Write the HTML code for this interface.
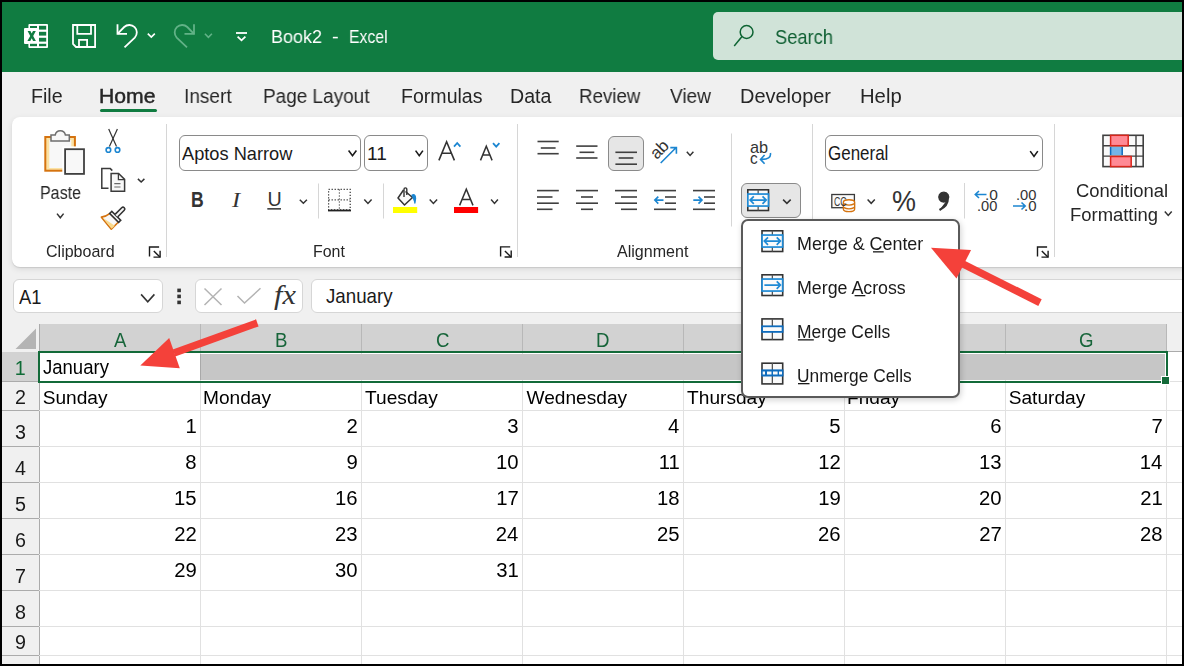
<!DOCTYPE html>
<html><head><meta charset="utf-8"><style>
html,body{margin:0;padding:0;}
body{width:1184px;height:666px;overflow:hidden;position:relative;background:#f0f0f0;font-family:"Liberation Sans",sans-serif;}
svg{position:absolute;left:0;top:0;overflow:visible}
</style></head><body>
<div style="position:absolute;left:0px;top:0px;width:1184px;height:72px;background:#107c41;"></div>
<div style="position:absolute;left:713px;top:12px;width:480px;height:48px;background:#d0e3d8;border-radius:5px;"></div>
<div style="position:absolute;left:12px;top:117px;width:1190px;height:150px;background:#fff;border-radius:8px;box-shadow:0 1px 1px rgba(0,0,0,0.10), 0 2px 6px rgba(0,0,0,0.10);"></div>
<div style="position:absolute;left:100px;top:109px;width:57px;height:3px;background:#107c41;border-radius:2px;"></div>
<div style="position:absolute;left:13px;top:279px;width:150px;height:34px;background:#fff;box-sizing:border-box;border:1px solid #d6d6d6;border-radius:6px;"></div>
<div style="position:absolute;left:195px;top:279px;width:108px;height:34px;background:#fff;box-sizing:border-box;border:1px solid #d6d6d6;border-radius:6px;"></div>
<div style="position:absolute;left:311px;top:279px;width:900px;height:34px;background:#fff;box-sizing:border-box;border:1px solid #d6d6d6;border-radius:6px;"></div>
<div style="position:absolute;left:179px;top:135px;width:182px;height:36px;box-sizing:border-box;border:1px solid #8a8a8a;border-radius:6px;background:#fff"></div>
<div style="position:absolute;left:364px;top:135px;width:64px;height:36px;box-sizing:border-box;border:1px solid #8a8a8a;border-radius:6px;background:#fff"></div>
<div style="position:absolute;left:825px;top:135px;width:218px;height:36px;box-sizing:border-box;border:1px solid #8a8a8a;border-radius:6px;background:#fff"></div>
<div style="position:absolute;left:608px;top:135.5px;width:36px;height:35px;box-sizing:border-box;border:1px solid #8a8a8a;border-radius:6px;background:#e6e6e6"></div>
<div style="position:absolute;left:741px;top:183px;width:60px;height:35px;box-sizing:border-box;border:1px solid #8a8a8a;border-radius:6px;background:#e6e6e6"></div>
<div style="position:absolute;left:651px;top:141px;font-family:'Liberation Sans',sans-serif;font-size:17px;line-height:1;color:#333;transform:rotate(-45deg);transform-origin:50% 50%;left:649.5px;top:140.5px">ab</div>
<svg width="1184" height="666"><path d="M29.4,24 H47 a1,1 0 0 1 1,1 V47 a1,1 0 0 1 -1,1 H29.4 a1,1 0 0 1 -1,-1 V44 H25 a1,1 0 0 1 -1,-1 V29 a1,1 0 0 1 1,-1 H28.4 V25 a1,1 0 0 1 1,-1 Z" fill="#fff"/><rect x="39" y="25.8" width="7.2" height="3.8" fill="#107c41"/><rect x="39" y="31.8" width="7.2" height="3.8" fill="#107c41"/><rect x="39" y="37.8" width="7.2" height="3.8" fill="#107c41"/><rect x="39" y="43.8" width="7.2" height="2.4" fill="#107c41"/><rect x="30" y="26" width="7" height="2" fill="#107c41"/><rect x="30" y="43.8" width="7" height="2.4" fill="#107c41"/><path d="M27.6,31 H30.4 L31.7,33.6 L33,31 H35.8 L33.2,35.9 L35.9,41 H33.1 L31.7,38.2 L30.3,41 H27.4 L30.2,35.9 Z" fill="#107c41"/><g fill="none" stroke="#fff" stroke-width="1.8"><path d="M73,25 H95.1 V47 H76 L73,44 Z"/><path d="M77.3,25 V33.8 H91 V25"/><path d="M79,47 V39.9 H87.1 V47"/></g><g fill="none" stroke="#fff" stroke-width="1.8"><path d="M117.5,24.2 V33.9 H127"/><path d="M117.5,33.9 L124.2,27 A7.5,7.5 0 0 1 134.8,37.6 L124.5,47.3"/><path d="M147.8,33.6 L151.3,37.1 L154.8,33.6" stroke-width="1.6"/></g><g fill="none" stroke="#62b287" stroke-width="1.8" transform="translate(311.5,0) scale(-1,1)"><path d="M117.5,24.2 V33.9 H127"/><path d="M117.5,33.9 L124.2,27 A7.5,7.5 0 0 1 134.8,37.6 L124.5,47.3"/></g><path d="M204.9,33.8 L208.4,37.3 L211.9,33.8" fill="none" stroke="#62b287" stroke-width="1.6"/><rect x="236" y="32.1" width="11" height="1.8" fill="#fff"/><path d="M237.6,36.6 L241.5,40.3 L245.4,36.6" fill="none" stroke="#fff" stroke-width="1.8"/><g fill="none" stroke="#0e6433" stroke-width="1.5"><circle cx="746.6" cy="32" r="6.4"/><path d="M742,36.6 L734.2,45.9"/></g><rect x="45.3" y="137" width="29.6" height="33.7" fill="#fbe2a4" stroke="#d5730f" stroke-width="2"/><rect x="49.3" y="140" width="22" height="28" fill="#f8f8f8"/><path d="M55.2,135 A5.2,5.2 0 0 1 65.4,135 H69.3 V141 H51 V135 Z" fill="#f8f8f8" stroke="#6e6e6e" stroke-width="1.5"/><rect x="62.3" y="146.4" width="24" height="30.4" fill="#fff"/><rect x="65.1" y="149.2" width="18.9" height="24.7" fill="#f8f8f8" stroke="#404040" stroke-width="1.8"/><g fill="none" stroke="#333" stroke-width="1.2"><path d="M108.7,129 L116.5,146.6"/><path d="M117.4,129 L109.4,146.6"/></g><g fill="none" stroke="#1c86d1" stroke-width="1.6"><circle cx="108.4" cy="149.9" r="2.3"/><circle cx="117.5" cy="149.9" r="2.3"/></g><path d="M108.5,188.3 H101.8 V168.6 H110.3 L112.3,170.6" fill="none" stroke="#3b3b3b" stroke-width="1.5"/><path d="M111.1,173.4 H118.6 L124.6,179.4 V191.2 H111.1 Z" fill="#f8f8f8" stroke="#3b3b3b" stroke-width="1.5"/><path d="M118.4,173.4 V179.6 H124.6" fill="none" stroke="#3b3b3b" stroke-width="1.3"/><path d="M114.3,183.7 H120.5 M114.3,187 H120.5" stroke="#6a6a6a" stroke-width="1.2"/><g transform="translate(115.2,216.8) rotate(45)"><path d="M-6,1.3 Q-6.5,6 -9.5,10 L6,11.5 V1.3 Z" fill="#f8f8f8" stroke="#d5730f" stroke-width="1.6" stroke-linejoin="round"/><path d="M-8.5,9.5 L6,11 V6.5 Z" fill="#f9d98c"/><path d="M-6.3,-1.5 H6.3 V1.5 H-6.3 Z" fill="#f8f8f8" stroke="#333" stroke-width="1.6"/><path d="M-1.8,-1.6 V-11 A1.8,1.8 0 0 1 1.8,-11 V-1.6" fill="#f8f8f8" stroke="#333" stroke-width="1.6"/></g><path d="M57.0,213.6 L60.3,217.70000000000002 L63.6,213.6" fill="none" stroke="#333" stroke-width="1.5"/><path d="M137.9,178.9 L141.15,182.0 L144.4,178.9" fill="none" stroke="#333" stroke-width="1.5"/><g fill="none" stroke="#1a1a1a" stroke-width="1.4"><path d="M159.1,247 H149.5 V256.6"/><path d="M153.8,251.1 L159.9,257"/><path d="M160.1,250.7 V257.1 H153.5"/></g><g fill="none" stroke="#1a1a1a" stroke-width="1.4"><path d="M510.20000000000005,246.9 H500.6 V256.5"/><path d="M504.90000000000003,251.0 L511.0,256.9"/><path d="M511.20000000000005,250.6 V257.0 H504.6"/></g><g fill="none" stroke="#1a1a1a" stroke-width="1.4"><path d="M1047.1,247 H1037.5 V256.6"/><path d="M1041.8,251.1 L1047.9,257"/><path d="M1048.1,250.7 V257.1 H1041.5"/></g><rect x="166" y="124" width="1" height="133" fill="#d6d6d6"/><rect x="517" y="124" width="1" height="133" fill="#d6d6d6"/><rect x="812" y="124" width="1" height="133" fill="#d6d6d6"/><rect x="1054" y="124" width="1" height="133" fill="#d6d6d6"/><rect x="318" y="183.5" width="1" height="35.0" fill="#d6d6d6"/><rect x="383" y="183.5" width="1" height="35.0" fill="#d6d6d6"/><rect x="731" y="133.5" width="1" height="93.0" fill="#d6d6d6"/><rect x="964" y="183" width="1" height="35.5" fill="#d6d6d6"/><path d="M348.6,150.6 L352.5,155.70000000000002 L356.4,150.6" fill="none" stroke="#1a1a1a" stroke-width="1.6"/><path d="M415.6,150.6 L419.25,155.70000000000002 L422.9,150.6" fill="none" stroke="#1a1a1a" stroke-width="1.6"/><path d="M1030.1999999999998,151.1 L1034.0,156.4 L1037.8000000000002,151.1" fill="none" stroke="#1a1a1a" stroke-width="1.6"/><path d="M438.9,160.4 L446.6,141.8 L454.4,160.4 M441.9,153.2 H451.3" fill="none" stroke="#333" stroke-width="1.6"/><path d="M454,146.6 L457.2,143 L460.4,146.6" fill="none" stroke="#1c86d1" stroke-width="1.8"/><path d="M480.5,160.4 L486.3,146.2 L492.1,160.4 M482.8,155 H489.8" fill="none" stroke="#333" stroke-width="1.5"/><path d="M493,143.2 L496.2,146.6 L499.4,143.2" fill="none" stroke="#1c86d1" stroke-width="1.8"/><rect x="267.3" y="208.1" width="13.7" height="1.5" fill="#333"/><path d="M299.8,199.79999999999998 L303.35,203.20000000000002 L306.9,199.79999999999998" fill="none" stroke="#333" stroke-width="1.5"/><g fill="none" stroke="#333" stroke-width="1.2" stroke-dasharray="1.2,1.8"><rect x="328.6" y="189.4" width="21.6" height="20.4"/><path d="M339.4,189.4 V209.8 M328.6,199.8 H350.2"/></g><rect x="328" y="209.6" width="23" height="1.8" fill="#222"/><path d="M364.3,199.6 L367.95,203.4 L371.59999999999997,199.6" fill="none" stroke="#333" stroke-width="1.5"/><path d="M403.5,190 L398,198 L404.5,205 L412.5,197.5 L405.5,191.5" fill="#fafafa" stroke="#333" stroke-width="1.5" stroke-linejoin="round"/><path d="M404,197 V189.3 A1.4,1.4 0 0 1 406.8,189.3 V195" fill="none" stroke="#333" stroke-width="1.4"/><path d="M411.5,195.5 Q415.5,193 415.5,198.5 L414.8,203.5" fill="#1c86d1" stroke="#1c86d1" stroke-width="1.4"/><rect x="393" y="207" width="24.2" height="6" fill="#ffff00"/><path d="M429.70000000000005,199.6 L433.4,203.4 L437.09999999999997,199.6" fill="none" stroke="#333" stroke-width="1.5"/><path d="M459.6,205.4 L466.3,189.3 L473,205.4 M462,199.5 H470.6" fill="none" stroke="#333" stroke-width="1.5"/><rect x="454" y="207" width="24.1" height="6" fill="#ff0000"/><path d="M491.1,199.6 L494.5,203.4 L497.9,199.6" fill="none" stroke="#333" stroke-width="1.5"/><rect x="537.5" y="140.7" width="21.200000000000045" height="1.6" fill="#404040"/><rect x="540.8" y="147.2" width="14.800000000000068" height="1.6" fill="#404040"/><rect x="537.5" y="152.89999999999998" width="21.200000000000045" height="1.6" fill="#404040"/><rect x="576.2" y="145.29999999999998" width="21.299999999999955" height="1.6" fill="#404040"/><rect x="579.5" y="151.5" width="14.799999999999955" height="1.6" fill="#404040"/><rect x="576.2" y="157.2" width="21.299999999999955" height="1.6" fill="#404040"/><rect x="615.4" y="151.5" width="21.600000000000023" height="1.6" fill="#404040"/><rect x="618.7" y="157.2" width="14.699999999999932" height="1.6" fill="#404040"/><rect x="615.4" y="163.39999999999998" width="21.600000000000023" height="1.6" fill="#404040"/><path d="M660.7,163 L676.2,147.5 M670.3,147.6 H676.4 V153.7" fill="none" stroke="#1c86d1" stroke-width="1.6"/><path d="M686.8000000000001,151.79999999999998 L690.1,155.4 L693.4,151.79999999999998" fill="none" stroke="#333" stroke-width="1.5"/><rect x="537" y="189.79999999999998" width="21.799999999999955" height="1.6" fill="#404040"/><rect x="537" y="196.2" width="15.5" height="1.6" fill="#404040"/><rect x="537" y="202.39999999999998" width="21.799999999999955" height="1.6" fill="#404040"/><rect x="537" y="208.5" width="15.5" height="1.6" fill="#404040"/><rect x="576" y="189.79999999999998" width="22" height="1.6" fill="#404040"/><rect x="581" y="196.2" width="12" height="1.6" fill="#404040"/><rect x="576" y="202.39999999999998" width="22" height="1.6" fill="#404040"/><rect x="581" y="208.5" width="12" height="1.6" fill="#404040"/><rect x="615" y="189.79999999999998" width="22" height="1.6" fill="#404040"/><rect x="621" y="196.2" width="16" height="1.6" fill="#404040"/><rect x="615" y="202.39999999999998" width="22" height="1.6" fill="#404040"/><rect x="621" y="208.5" width="16" height="1.6" fill="#404040"/><rect x="654" y="189.79999999999998" width="22" height="1.6" fill="#404040"/><rect x="665" y="196.2" width="11" height="1.6" fill="#404040"/><rect x="665" y="202.39999999999998" width="11" height="1.6" fill="#404040"/><rect x="654" y="208.5" width="22" height="1.6" fill="#404040"/><path d="M663.5,200.1 H655 M658.3,196.6 L654.8,200.1 L658.3,203.6" fill="none" stroke="#1c86d1" stroke-width="1.6"/><rect x="693" y="189.79999999999998" width="22" height="1.6" fill="#404040"/><rect x="704" y="196.2" width="11" height="1.6" fill="#404040"/><rect x="704" y="202.39999999999998" width="11" height="1.6" fill="#404040"/><rect x="693" y="208.5" width="22" height="1.6" fill="#404040"/><path d="M693.3,200.1 H701.8 M698.5,196.6 L702,200.1 L698.5,203.6" fill="none" stroke="#1c86d1" stroke-width="1.6"/><path d="M770.4,153 Q771.5,159.5 761,159.4 M764.6,155 L760.5,159.4 L764.6,163.8" fill="none" stroke="#1c86d1" stroke-width="1.6"/><g transform="translate(747,189) scale(1.0)"><rect x="0.8" y="0.8" width="20.7" height="20.7" fill="#fafafa" stroke="#333" stroke-width="1.6"/><path d="M11.15,0.8 V21.5" stroke="#555" stroke-width="1.3"/><rect x="0.85" y="5.05" width="20.6" height="12" fill="#fafafa" stroke="#1f8ad5" stroke-width="1.7"/><path d="M3.2,11.1 H19.1 M6.8,7.4 L3.1,11.1 L6.8,14.8 M15.5,7.4 L19.2,11.1 L15.5,14.8" fill="none" stroke="#1f8ad5" stroke-width="1.7"/></g><path d="M783.1,199.6 L786.9,203.4 L790.6999999999999,199.6" fill="none" stroke="#333" stroke-width="1.5"/><rect x="831.8" y="194.5" width="22.6" height="13.2" fill="#fafafa" stroke="#3a3a3a" stroke-width="1.3"/><g fill="#fff" stroke="#d5730f" stroke-width="1.4"><rect x="843.4" y="199.8" width="11.2" height="11.8" rx="5.6" ry="2.4"/><path d="M843.4,203.7 Q849,206.6 854.6,203.7 M843.4,207.4 Q849,210.3 854.6,207.4" fill="none"/></g><path d="M867.6,199.6 L871.2,203.3 L874.8,199.6" fill="none" stroke="#333" stroke-width="1.5"/><path d="M943.8,192.6 a4.5,4.5 0 1 1 -0.1,0 M947.8,199 Q948,205.5 939.5,210" fill="#333" stroke="#333" stroke-width="2.2"/><path d="M986.5,194.5 H975.5 M979,191 L975.3,194.5 L979,198" fill="none" stroke="#1c86d1" stroke-width="1.6"/><path d="M1013,206 H1025 M1021.5,202.5 L1025.2,206 L1021.5,209.5" fill="none" stroke="#1c86d1" stroke-width="1.6"/><rect x="1103" y="135.3" width="40.2" height="31.3" fill="#fafafa" stroke="#404040" stroke-width="1.6"/><path d="M1103,145.8 H1143.2 M1103,156.1 H1143.2 M1136,135.3 V166.6" stroke="#404040" stroke-width="1.4"/><rect x="1110.6" y="135.3" width="17.6" height="10.4" fill="#ff8a95" stroke="#d9261c" stroke-width="1.5"/><rect x="1110.6" y="147" width="11.6" height="8" fill="#74b5e9"/><path d="M1110.6,147 V155 M1122.2,147 V155" stroke="#0f6cbd" stroke-width="1.5"/><rect x="1110.6" y="156.5" width="20.6" height="10.1" fill="#ff8a95" stroke="#d9261c" stroke-width="1.5"/><path d="M1164.8,211.6 L1168.25,215.4 L1171.7,211.6" fill="none" stroke="#333" stroke-width="1.5"/><g fill="none" stroke="#b3b3b3" stroke-width="1.5"><path d="M204.5,288.5 L221.5,305 M221.5,288.5 L204.5,305"/><path d="M237.5,296 L244.5,303 L260.5,288.3"/></g><path d="M141.1,294.40000000000003 L147.75,301.7 L154.4,294.40000000000003" fill="none" stroke="#333" stroke-width="1.6"/><g fill="#333"><rect x="177.3" y="288.6" width="3.6" height="3.6"/><rect x="177.3" y="294.6" width="3.6" height="3.6"/><rect x="177.3" y="300.6" width="3.6" height="3.6"/></g></svg>
<div style="position:absolute;left:190.75px;top:190.00px;font-family:'Liberation Sans',sans-serif;font-size:21.45px;line-height:1;white-space:pre;color:#333;font-weight:bold;font-style:normal;transform-origin:0 0;transform:scaleX(0.8196);">B</div>
<div style="position:absolute;left:231.64px;top:190.00px;font-family:'Liberation Serif',serif;font-size:21.45px;line-height:1;white-space:pre;color:#333;font-weight:normal;font-style:italic;transform-origin:0 0;transform:scaleX(1.1356);">I</div>
<div style="position:absolute;left:267.52px;top:190.00px;font-family:'Liberation Sans',sans-serif;font-size:19.71px;line-height:1;white-space:pre;color:#333;font-weight:normal;font-style:normal;transform-origin:0 0;">U</div>
<div style="position:absolute;left:833.56px;top:195.00px;font-family:'Liberation Sans',sans-serif;font-size:13.04px;line-height:1;white-space:pre;color:#3a3a3a;font-weight:normal;font-style:normal;transform-origin:0 0;transform:scaleX(0.6756);">CC</div>
<div style="position:absolute;left:891.99px;top:186.00px;font-family:'Liberation Sans',sans-serif;font-size:29.42px;line-height:1;white-space:pre;color:#333;font-weight:normal;font-style:normal;transform-origin:0 0;transform:scaleX(0.9173);">%</div>
<div style="position:absolute;left:984.60px;top:188.00px;font-family:'Liberation Sans',sans-serif;font-size:14.20px;line-height:1;white-space:pre;color:#333;font-weight:normal;font-style:normal;transform-origin:0 0;transform:scaleX(1.0944);">.0</div>
<div style="position:absolute;left:976.98px;top:199.00px;font-family:'Liberation Sans',sans-serif;font-size:14.20px;line-height:1;white-space:pre;color:#333;font-weight:normal;font-style:normal;transform-origin:0 0;transform:scaleX(1.0307);">.00</div>
<div style="position:absolute;left:1015.68px;top:188.00px;font-family:'Liberation Sans',sans-serif;font-size:14.20px;line-height:1;white-space:pre;color:#333;font-weight:normal;font-style:normal;transform-origin:0 0;transform:scaleX(1.0363);">.00</div>
<div style="position:absolute;left:1023.65px;top:199.00px;font-family:'Liberation Sans',sans-serif;font-size:14.20px;line-height:1;white-space:pre;color:#333;font-weight:normal;font-style:normal;transform-origin:0 0;transform:scaleX(1.0546);">.0</div>
<div style="position:absolute;left:274.20px;top:282.00px;font-family:'Liberation Serif',serif;font-size:26.81px;line-height:1;white-space:pre;color:#333;font-weight:normal;font-style:italic;transform-origin:0 0;transform:scaleX(1.1330);">fx</div>
<div style="position:absolute;left:750.45px;top:140.00px;font-family:'Liberation Sans',sans-serif;font-size:16.81px;line-height:1;white-space:pre;color:#333;font-weight:normal;font-style:normal;transform-origin:0 0;transform:scaleX(0.9703);">ab</div>
<div style="position:absolute;left:750.49px;top:150.00px;font-family:'Liberation Sans',sans-serif;font-size:16.50px;line-height:1;white-space:pre;color:#333;font-weight:normal;font-style:normal;transform-origin:0 0;transform:scaleX(0.9300);">c</div>
<div style="position:absolute;left:270.76px;top:28.00px;font-family:'Liberation Sans',sans-serif;font-size:18.41px;line-height:1;white-space:pre;color:#fff;font-weight:normal;font-style:normal;transform-origin:0 0;transform:scaleX(0.9764);will-change:transform;">Book2</div>
<div style="position:absolute;left:332.20px;top:28.00px;font-family:'Liberation Sans',sans-serif;font-size:18.41px;line-height:1;white-space:pre;color:#fff;font-weight:normal;font-style:normal;transform-origin:0 0;transform:scaleX(1.0864);will-change:transform;">-</div>
<div style="position:absolute;left:348.74px;top:28.00px;font-family:'Liberation Sans',sans-serif;font-size:18.41px;line-height:1;white-space:pre;color:#fff;font-weight:normal;font-style:normal;transform-origin:0 0;transform:scaleX(0.8561);will-change:transform;">Excel</div>
<div style="position:absolute;left:775.17px;top:28.00px;font-family:'Liberation Sans',sans-serif;font-size:19.42px;line-height:1;white-space:pre;color:#0e5f32;font-weight:normal;font-style:normal;transform-origin:0 0;transform:scaleX(0.9419);will-change:transform;">Search</div>
<div style="position:absolute;left:31.03px;top:87.00px;font-family:'Liberation Sans',sans-serif;font-size:19.57px;line-height:1;white-space:pre;color:#262626;font-weight:normal;font-style:normal;transform-origin:0 0;transform:scaleX(1.0048);will-change:transform;">File</div>
<div style="position:absolute;left:99.31px;top:87.00px;font-family:'Liberation Sans',sans-serif;font-size:19.57px;line-height:1;white-space:pre;color:#262626;font-weight:normal;font-style:normal;transform-origin:0 0;transform:scaleX(1.0815);-webkit-text-stroke:0.45px #262626;will-change:transform;">Home</div>
<div style="position:absolute;left:184.28px;top:87.00px;font-family:'Liberation Sans',sans-serif;font-size:19.57px;line-height:1;white-space:pre;color:#262626;font-weight:normal;font-style:normal;transform-origin:0 0;transform:scaleX(0.9741);will-change:transform;">Insert</div>
<div style="position:absolute;left:263.48px;top:87.00px;font-family:'Liberation Sans',sans-serif;font-size:19.57px;line-height:1;white-space:pre;color:#262626;font-weight:normal;font-style:normal;transform-origin:0 0;transform:scaleX(0.9688);will-change:transform;">Page Layout</div>
<div style="position:absolute;left:401.14px;top:87.00px;font-family:'Liberation Sans',sans-serif;font-size:19.57px;line-height:1;white-space:pre;color:#262626;font-weight:normal;font-style:normal;transform-origin:0 0;will-change:transform;">Formulas</div>
<div style="position:absolute;left:510.23px;top:87.00px;font-family:'Liberation Sans',sans-serif;font-size:19.57px;line-height:1;white-space:pre;color:#262626;font-weight:normal;font-style:normal;transform-origin:0 0;will-change:transform;">Data</div>
<div style="position:absolute;left:578.50px;top:87.00px;font-family:'Liberation Sans',sans-serif;font-size:19.57px;line-height:1;white-space:pre;color:#262626;font-weight:normal;font-style:normal;transform-origin:0 0;transform:scaleX(0.9561);will-change:transform;">Review</div>
<div style="position:absolute;left:670.30px;top:87.00px;font-family:'Liberation Sans',sans-serif;font-size:19.57px;line-height:1;white-space:pre;color:#262626;font-weight:normal;font-style:normal;transform-origin:0 0;transform:scaleX(0.9712);will-change:transform;">View</div>
<div style="position:absolute;left:739.60px;top:87.00px;font-family:'Liberation Sans',sans-serif;font-size:19.57px;line-height:1;white-space:pre;color:#262626;font-weight:normal;font-style:normal;transform-origin:0 0;transform:scaleX(1.0208);will-change:transform;">Developer</div>
<div style="position:absolute;left:859.88px;top:87.00px;font-family:'Liberation Sans',sans-serif;font-size:19.57px;line-height:1;white-space:pre;color:#262626;font-weight:normal;font-style:normal;transform-origin:0 0;transform:scaleX(1.0349);will-change:transform;">Help</div>
<div style="position:absolute;left:40.22px;top:184.00px;font-family:'Liberation Sans',sans-serif;font-size:18.55px;line-height:1;white-space:pre;color:#262626;font-weight:normal;font-style:normal;transform-origin:0 0;transform:scaleX(0.8657);will-change:transform;">Paste</div>
<div style="position:absolute;left:45.60px;top:244.00px;font-family:'Liberation Sans',sans-serif;font-size:15.94px;line-height:1;white-space:pre;color:#262626;font-weight:normal;font-style:normal;transform-origin:0 0;transform:scaleX(1.0055);will-change:transform;">Clipboard</div>
<div style="position:absolute;left:313.23px;top:244.00px;font-family:'Liberation Sans',sans-serif;font-size:15.94px;line-height:1;white-space:pre;color:#262626;font-weight:normal;font-style:normal;transform-origin:0 0;transform:scaleX(0.9949);will-change:transform;">Font</div>
<div style="position:absolute;left:617.40px;top:244.00px;font-family:'Liberation Sans',sans-serif;font-size:15.94px;line-height:1;white-space:pre;color:#262626;font-weight:normal;font-style:normal;transform-origin:0 0;transform:scaleX(1.0068);will-change:transform;">Alignment</div>
<div style="position:absolute;left:1076.38px;top:182.00px;font-family:'Liberation Sans',sans-serif;font-size:18.41px;line-height:1;white-space:pre;color:#262626;font-weight:normal;font-style:normal;transform-origin:0 0;will-change:transform;">Conditional</div>
<div style="position:absolute;left:1069.83px;top:206.00px;font-family:'Liberation Sans',sans-serif;font-size:18.12px;line-height:1;white-space:pre;color:#262626;font-weight:normal;font-style:normal;transform-origin:0 0;transform:scaleX(1.0174);will-change:transform;">Formatting</div>
<div style="position:absolute;left:182.20px;top:145.00px;font-family:'Liberation Sans',sans-serif;font-size:18.84px;line-height:1;white-space:pre;color:#1a1a1a;font-weight:normal;font-style:normal;transform-origin:0 0;transform:scaleX(0.9679);">Aptos Narrow</div>
<div style="position:absolute;left:366.66px;top:145.00px;font-family:'Liberation Sans',sans-serif;font-size:18.84px;line-height:1;white-space:pre;color:#1a1a1a;font-weight:normal;font-style:normal;transform-origin:0 0;transform:scaleX(1.0133);">11</div>
<div style="position:absolute;left:827.65px;top:143.00px;font-family:'Liberation Sans',sans-serif;font-size:20.29px;line-height:1;white-space:pre;color:#1a1a1a;font-weight:normal;font-style:normal;transform-origin:0 0;transform:scaleX(0.8368);">General</div>
<div style="position:absolute;left:19.40px;top:287.00px;font-family:'Liberation Sans',sans-serif;font-size:20.29px;line-height:1;white-space:pre;color:#1a1a1a;font-weight:normal;font-style:normal;transform-origin:0 0;transform:scaleX(0.9045);">A1</div>
<div style="position:absolute;left:326.21px;top:287.00px;font-family:'Liberation Sans',sans-serif;font-size:19.42px;line-height:1;white-space:pre;color:#1a1a1a;font-weight:normal;font-style:normal;transform-origin:0 0;transform:scaleX(0.9652);">January</div>
<div style="position:absolute;left:39px;top:352px;width:1145px;height:314px;background:#fff;"></div>
<div style="position:absolute;left:39px;top:324px;width:1127px;height:28px;background:#d2d2d2;"></div>
<div style="position:absolute;left:39px;top:351px;width:1145px;height:1px;background:#ababab;"></div>
<div style="position:absolute;left:2px;top:352px;width:37px;height:314px;background:#f0f0f0;"></div>
<div style="position:absolute;left:2px;top:352px;width:37px;height:29px;background:#d2d2d2;"></div>
<div style="position:absolute;left:39px;top:324px;width:1px;height:342px;background:#ababab;"></div>
<div style="position:absolute;left:200px;top:324px;width:1px;height:28px;background:#b8b8b8;"></div>
<div style="position:absolute;left:200px;top:352px;width:1px;height:314px;background:#e1e1e1;"></div>
<div style="position:absolute;left:361px;top:324px;width:1px;height:28px;background:#b8b8b8;"></div>
<div style="position:absolute;left:361px;top:352px;width:1px;height:314px;background:#e1e1e1;"></div>
<div style="position:absolute;left:522px;top:324px;width:1px;height:28px;background:#b8b8b8;"></div>
<div style="position:absolute;left:522px;top:352px;width:1px;height:314px;background:#e1e1e1;"></div>
<div style="position:absolute;left:683px;top:324px;width:1px;height:28px;background:#b8b8b8;"></div>
<div style="position:absolute;left:683px;top:352px;width:1px;height:314px;background:#e1e1e1;"></div>
<div style="position:absolute;left:844px;top:324px;width:1px;height:28px;background:#b8b8b8;"></div>
<div style="position:absolute;left:844px;top:352px;width:1px;height:314px;background:#e1e1e1;"></div>
<div style="position:absolute;left:1005px;top:324px;width:1px;height:28px;background:#b8b8b8;"></div>
<div style="position:absolute;left:1005px;top:352px;width:1px;height:314px;background:#e1e1e1;"></div>
<div style="position:absolute;left:1166px;top:324px;width:1px;height:28px;background:#b8b8b8;"></div>
<div style="position:absolute;left:1166px;top:352px;width:1px;height:314px;background:#e1e1e1;"></div>
<div style="position:absolute;left:39px;top:381px;width:1145px;height:1px;background:#e1e1e1;"></div>
<div style="position:absolute;left:2px;top:381px;width:37px;height:1px;background:#ababab;"></div>
<div style="position:absolute;left:39px;top:410px;width:1145px;height:1px;background:#e1e1e1;"></div>
<div style="position:absolute;left:2px;top:410px;width:37px;height:1px;background:#ababab;"></div>
<div style="position:absolute;left:39px;top:446px;width:1145px;height:1px;background:#e1e1e1;"></div>
<div style="position:absolute;left:2px;top:446px;width:37px;height:1px;background:#ababab;"></div>
<div style="position:absolute;left:39px;top:482px;width:1145px;height:1px;background:#e1e1e1;"></div>
<div style="position:absolute;left:2px;top:482px;width:37px;height:1px;background:#ababab;"></div>
<div style="position:absolute;left:39px;top:518px;width:1145px;height:1px;background:#e1e1e1;"></div>
<div style="position:absolute;left:2px;top:518px;width:37px;height:1px;background:#ababab;"></div>
<div style="position:absolute;left:39px;top:554px;width:1145px;height:1px;background:#e1e1e1;"></div>
<div style="position:absolute;left:2px;top:554px;width:37px;height:1px;background:#ababab;"></div>
<div style="position:absolute;left:39px;top:590px;width:1145px;height:1px;background:#e1e1e1;"></div>
<div style="position:absolute;left:2px;top:590px;width:37px;height:1px;background:#ababab;"></div>
<div style="position:absolute;left:39px;top:626px;width:1145px;height:1px;background:#e1e1e1;"></div>
<div style="position:absolute;left:2px;top:626px;width:37px;height:1px;background:#ababab;"></div>
<div style="position:absolute;left:39px;top:655px;width:1145px;height:1px;background:#e1e1e1;"></div>
<div style="position:absolute;left:2px;top:655px;width:37px;height:1px;background:#ababab;"></div>
<div style="position:absolute;left:39px;top:691px;width:1145px;height:1px;background:#e1e1e1;"></div>
<div style="position:absolute;left:2px;top:691px;width:37px;height:1px;background:#ababab;"></div>
<svg width="1184" height="666"><polygon points="15.5,349 36,349 36,328.5" fill="#b4b4b4"/></svg>
<div style="position:absolute;left:200px;top:354px;width:965px;height:26px;background:#c6c6c6;"></div>
<div style="position:absolute;left:200px;top:354px;width:1px;height:26px;background:#a9a9a9;"></div>
<div style="position:absolute;left:38px;top:351px;width:1130px;height:32px;background:transparent;box-sizing:border-box;border:2px solid #136a39;"></div>
<div style="position:absolute;left:1162px;top:377px;width:7px;height:7px;background:#136a39;outline:1px solid #fff;"></div>
<div style="position:absolute;left:114.25px;top:330.00px;font-family:'Liberation Sans',sans-serif;font-size:20.29px;line-height:1;white-space:pre;color:#17653a;font-weight:normal;font-style:normal;transform-origin:0 0;transform:scaleX(0.9200);">A</div>
<div style="position:absolute;left:274.97px;top:330.00px;font-family:'Liberation Sans',sans-serif;font-size:20.29px;line-height:1;white-space:pre;color:#17653a;font-weight:normal;font-style:normal;transform-origin:0 0;transform:scaleX(0.9200);">B</div>
<div style="position:absolute;left:435.59px;top:330.00px;font-family:'Liberation Sans',sans-serif;font-size:20.29px;line-height:1;white-space:pre;color:#17653a;font-weight:normal;font-style:normal;transform-origin:0 0;transform:scaleX(0.9200);">C</div>
<div style="position:absolute;left:596.41px;top:330.00px;font-family:'Liberation Sans',sans-serif;font-size:20.29px;line-height:1;white-space:pre;color:#17653a;font-weight:normal;font-style:normal;transform-origin:0 0;transform:scaleX(0.9200);">D</div>
<div style="position:absolute;left:757.87px;top:330.00px;font-family:'Liberation Sans',sans-serif;font-size:20.29px;line-height:1;white-space:pre;color:#17653a;font-weight:normal;font-style:normal;transform-origin:0 0;transform:scaleX(0.9200);">E</div>
<div style="position:absolute;left:919.34px;top:330.00px;font-family:'Liberation Sans',sans-serif;font-size:20.29px;line-height:1;white-space:pre;color:#17653a;font-weight:normal;font-style:normal;transform-origin:0 0;transform:scaleX(0.9200);">F</div>
<div style="position:absolute;left:1079.41px;top:330.00px;font-family:'Liberation Sans',sans-serif;font-size:20.29px;line-height:1;white-space:pre;color:#17653a;font-weight:normal;font-style:normal;transform-origin:0 0;transform:scaleX(0.9200);">G</div>
<div style="position:absolute;left:14.78px;top:359.00px;font-family:'Liberation Sans',sans-serif;font-size:19.71px;line-height:1;white-space:pre;color:#0e6b36;font-weight:normal;font-style:normal;transform-origin:0 0;">1</div>
<div style="position:absolute;left:14.98px;top:388.00px;font-family:'Liberation Sans',sans-serif;font-size:19.71px;line-height:1;white-space:pre;color:#1a1a1a;font-weight:normal;font-style:normal;transform-origin:0 0;">2</div>
<div style="position:absolute;left:15.08px;top:423.00px;font-family:'Liberation Sans',sans-serif;font-size:19.71px;line-height:1;white-space:pre;color:#1a1a1a;font-weight:normal;font-style:normal;transform-origin:0 0;">3</div>
<div style="position:absolute;left:15.08px;top:459.00px;font-family:'Liberation Sans',sans-serif;font-size:19.71px;line-height:1;white-space:pre;color:#1a1a1a;font-weight:normal;font-style:normal;transform-origin:0 0;">4</div>
<div style="position:absolute;left:14.98px;top:495.00px;font-family:'Liberation Sans',sans-serif;font-size:19.71px;line-height:1;white-space:pre;color:#1a1a1a;font-weight:normal;font-style:normal;transform-origin:0 0;">5</div>
<div style="position:absolute;left:14.88px;top:531.00px;font-family:'Liberation Sans',sans-serif;font-size:19.71px;line-height:1;white-space:pre;color:#1a1a1a;font-weight:normal;font-style:normal;transform-origin:0 0;">6</div>
<div style="position:absolute;left:14.98px;top:567.00px;font-family:'Liberation Sans',sans-serif;font-size:19.71px;line-height:1;white-space:pre;color:#1a1a1a;font-weight:normal;font-style:normal;transform-origin:0 0;">7</div>
<div style="position:absolute;left:14.98px;top:603.00px;font-family:'Liberation Sans',sans-serif;font-size:19.71px;line-height:1;white-space:pre;color:#1a1a1a;font-weight:normal;font-style:normal;transform-origin:0 0;">8</div>
<div style="position:absolute;left:15.08px;top:633.00px;font-family:'Liberation Sans',sans-serif;font-size:19.71px;line-height:1;white-space:pre;color:#1a1a1a;font-weight:normal;font-style:normal;transform-origin:0 0;">9</div>
<div style="position:absolute;left:43.31px;top:358.00px;font-family:'Liberation Sans',sans-serif;font-size:19.71px;line-height:1;white-space:pre;color:#000;font-weight:normal;font-style:normal;transform-origin:0 0;transform:scaleX(0.9410);">January</div>
<div style="position:absolute;left:42.73px;top:388.00px;font-family:'Liberation Sans',sans-serif;font-size:19.13px;line-height:1;white-space:pre;color:#000;font-weight:normal;font-style:normal;transform-origin:0 0;">Sunday</div>
<div style="position:absolute;left:202.97px;top:388.00px;font-family:'Liberation Sans',sans-serif;font-size:19.13px;line-height:1;white-space:pre;color:#000;font-weight:normal;font-style:normal;transform-origin:0 0;">Monday</div>
<div style="position:absolute;left:365.12px;top:388.00px;font-family:'Liberation Sans',sans-serif;font-size:19.13px;line-height:1;white-space:pre;color:#000;font-weight:normal;font-style:normal;transform-origin:0 0;">Tuesday</div>
<div style="position:absolute;left:526.50px;top:388.00px;font-family:'Liberation Sans',sans-serif;font-size:19.13px;line-height:1;white-space:pre;color:#000;font-weight:normal;font-style:normal;transform-origin:0 0;">Wednesday</div>
<div style="position:absolute;left:687.12px;top:388.00px;font-family:'Liberation Sans',sans-serif;font-size:19.13px;line-height:1;white-space:pre;color:#000;font-weight:normal;font-style:normal;transform-origin:0 0;">Thursday</div>
<div style="position:absolute;left:846.97px;top:388.00px;font-family:'Liberation Sans',sans-serif;font-size:19.13px;line-height:1;white-space:pre;color:#000;font-weight:normal;font-style:normal;transform-origin:0 0;">Friday</div>
<div style="position:absolute;left:1008.73px;top:388.00px;font-family:'Liberation Sans',sans-serif;font-size:19.13px;line-height:1;white-space:pre;color:#000;font-weight:normal;font-style:normal;transform-origin:0 0;">Saturday</div>
<div style="position:absolute;left:185.45px;top:416.00px;font-family:'Liberation Sans',sans-serif;font-size:20.29px;line-height:1;white-space:pre;color:#000;font-weight:normal;font-style:normal;transform-origin:0 0;">1</div>
<div style="position:absolute;left:346.45px;top:416.00px;font-family:'Liberation Sans',sans-serif;font-size:20.29px;line-height:1;white-space:pre;color:#000;font-weight:normal;font-style:normal;transform-origin:0 0;">2</div>
<div style="position:absolute;left:507.25px;top:416.00px;font-family:'Liberation Sans',sans-serif;font-size:20.29px;line-height:1;white-space:pre;color:#000;font-weight:normal;font-style:normal;transform-origin:0 0;">3</div>
<div style="position:absolute;left:668.05px;top:416.00px;font-family:'Liberation Sans',sans-serif;font-size:20.29px;line-height:1;white-space:pre;color:#000;font-weight:normal;font-style:normal;transform-origin:0 0;">4</div>
<div style="position:absolute;left:829.25px;top:416.00px;font-family:'Liberation Sans',sans-serif;font-size:20.29px;line-height:1;white-space:pre;color:#000;font-weight:normal;font-style:normal;transform-origin:0 0;">5</div>
<div style="position:absolute;left:990.25px;top:416.00px;font-family:'Liberation Sans',sans-serif;font-size:20.29px;line-height:1;white-space:pre;color:#000;font-weight:normal;font-style:normal;transform-origin:0 0;">6</div>
<div style="position:absolute;left:1151.45px;top:416.00px;font-family:'Liberation Sans',sans-serif;font-size:20.29px;line-height:1;white-space:pre;color:#000;font-weight:normal;font-style:normal;transform-origin:0 0;">7</div>
<div style="position:absolute;left:185.25px;top:452.00px;font-family:'Liberation Sans',sans-serif;font-size:20.29px;line-height:1;white-space:pre;color:#000;font-weight:normal;font-style:normal;transform-origin:0 0;">8</div>
<div style="position:absolute;left:346.45px;top:452.00px;font-family:'Liberation Sans',sans-serif;font-size:20.29px;line-height:1;white-space:pre;color:#000;font-weight:normal;font-style:normal;transform-origin:0 0;">9</div>
<div style="position:absolute;left:495.96px;top:452.00px;font-family:'Liberation Sans',sans-serif;font-size:20.29px;line-height:1;white-space:pre;color:#000;font-weight:normal;font-style:normal;transform-origin:0 0;">10</div>
<div style="position:absolute;left:658.67px;top:452.00px;font-family:'Liberation Sans',sans-serif;font-size:20.29px;line-height:1;white-space:pre;color:#000;font-weight:normal;font-style:normal;transform-origin:0 0;">11</div>
<div style="position:absolute;left:818.17px;top:452.00px;font-family:'Liberation Sans',sans-serif;font-size:20.29px;line-height:1;white-space:pre;color:#000;font-weight:normal;font-style:normal;transform-origin:0 0;">12</div>
<div style="position:absolute;left:978.96px;top:452.00px;font-family:'Liberation Sans',sans-serif;font-size:20.29px;line-height:1;white-space:pre;color:#000;font-weight:normal;font-style:normal;transform-origin:0 0;">13</div>
<div style="position:absolute;left:1139.76px;top:452.00px;font-family:'Liberation Sans',sans-serif;font-size:20.29px;line-height:1;white-space:pre;color:#000;font-weight:normal;font-style:normal;transform-origin:0 0;">14</div>
<div style="position:absolute;left:173.96px;top:488.00px;font-family:'Liberation Sans',sans-serif;font-size:20.29px;line-height:1;white-space:pre;color:#000;font-weight:normal;font-style:normal;transform-origin:0 0;">15</div>
<div style="position:absolute;left:334.96px;top:488.00px;font-family:'Liberation Sans',sans-serif;font-size:20.29px;line-height:1;white-space:pre;color:#000;font-weight:normal;font-style:normal;transform-origin:0 0;">16</div>
<div style="position:absolute;left:496.17px;top:488.00px;font-family:'Liberation Sans',sans-serif;font-size:20.29px;line-height:1;white-space:pre;color:#000;font-weight:normal;font-style:normal;transform-origin:0 0;">17</div>
<div style="position:absolute;left:656.96px;top:488.00px;font-family:'Liberation Sans',sans-serif;font-size:20.29px;line-height:1;white-space:pre;color:#000;font-weight:normal;font-style:normal;transform-origin:0 0;">18</div>
<div style="position:absolute;left:818.17px;top:488.00px;font-family:'Liberation Sans',sans-serif;font-size:20.29px;line-height:1;white-space:pre;color:#000;font-weight:normal;font-style:normal;transform-origin:0 0;">19</div>
<div style="position:absolute;left:978.96px;top:488.00px;font-family:'Liberation Sans',sans-serif;font-size:20.29px;line-height:1;white-space:pre;color:#000;font-weight:normal;font-style:normal;transform-origin:0 0;">20</div>
<div style="position:absolute;left:1140.17px;top:488.00px;font-family:'Liberation Sans',sans-serif;font-size:20.29px;line-height:1;white-space:pre;color:#000;font-weight:normal;font-style:normal;transform-origin:0 0;">21</div>
<div style="position:absolute;left:174.17px;top:524.00px;font-family:'Liberation Sans',sans-serif;font-size:20.29px;line-height:1;white-space:pre;color:#000;font-weight:normal;font-style:normal;transform-origin:0 0;">22</div>
<div style="position:absolute;left:334.96px;top:524.00px;font-family:'Liberation Sans',sans-serif;font-size:20.29px;line-height:1;white-space:pre;color:#000;font-weight:normal;font-style:normal;transform-origin:0 0;">23</div>
<div style="position:absolute;left:495.76px;top:524.00px;font-family:'Liberation Sans',sans-serif;font-size:20.29px;line-height:1;white-space:pre;color:#000;font-weight:normal;font-style:normal;transform-origin:0 0;">24</div>
<div style="position:absolute;left:656.96px;top:524.00px;font-family:'Liberation Sans',sans-serif;font-size:20.29px;line-height:1;white-space:pre;color:#000;font-weight:normal;font-style:normal;transform-origin:0 0;">25</div>
<div style="position:absolute;left:817.96px;top:524.00px;font-family:'Liberation Sans',sans-serif;font-size:20.29px;line-height:1;white-space:pre;color:#000;font-weight:normal;font-style:normal;transform-origin:0 0;">26</div>
<div style="position:absolute;left:979.17px;top:524.00px;font-family:'Liberation Sans',sans-serif;font-size:20.29px;line-height:1;white-space:pre;color:#000;font-weight:normal;font-style:normal;transform-origin:0 0;">27</div>
<div style="position:absolute;left:1139.96px;top:524.00px;font-family:'Liberation Sans',sans-serif;font-size:20.29px;line-height:1;white-space:pre;color:#000;font-weight:normal;font-style:normal;transform-origin:0 0;">28</div>
<div style="position:absolute;left:174.17px;top:560.00px;font-family:'Liberation Sans',sans-serif;font-size:20.29px;line-height:1;white-space:pre;color:#000;font-weight:normal;font-style:normal;transform-origin:0 0;">29</div>
<div style="position:absolute;left:334.96px;top:560.00px;font-family:'Liberation Sans',sans-serif;font-size:20.29px;line-height:1;white-space:pre;color:#000;font-weight:normal;font-style:normal;transform-origin:0 0;">30</div>
<div style="position:absolute;left:496.17px;top:560.00px;font-family:'Liberation Sans',sans-serif;font-size:20.29px;line-height:1;white-space:pre;color:#000;font-weight:normal;font-style:normal;transform-origin:0 0;">31</div>
<div style="position:absolute;left:741px;top:219px;width:219px;height:179px;box-sizing:border-box;background:#fff;border:2px solid #5a5a5a;border-radius:7px;box-shadow:1px 2px 6px rgba(0,0,0,0.18)"></div>
<svg width="1184" height="666"><g transform="translate(761.2,230) scale(1.0)"><rect x="0.8" y="0.8" width="20.7" height="20.7" fill="#fafafa" stroke="#333" stroke-width="1.6"/><path d="M11.15,0.8 V21.5" stroke="#555" stroke-width="1.3"/><rect x="0.85" y="5.05" width="20.6" height="12" fill="#fafafa" stroke="#1f8ad5" stroke-width="1.7"/><path d="M3.2,11.1 H19.1 M6.8,7.4 L3.1,11.1 L6.8,14.8 M15.5,7.4 L19.2,11.1 L15.5,14.8" fill="none" stroke="#1f8ad5" stroke-width="1.7"/></g><g transform="translate(761.2,274) scale(1.0)"><rect x="0.8" y="0.8" width="20.7" height="20.7" fill="#fafafa" stroke="#333" stroke-width="1.6"/><path d="M11.15,0.8 V21.5" stroke="#555" stroke-width="1.3"/><rect x="0.85" y="5.05" width="20.6" height="12" fill="#fafafa" stroke="#1f8ad5" stroke-width="1.7"/><path d="M3.2,11.1 H19.1 M15.5,7.4 L19.2,11.1 L15.5,14.8" fill="none" stroke="#1f8ad5" stroke-width="1.7"/></g><g transform="translate(761.2,318.1) scale(1.0)"><rect x="0.8" y="0.8" width="20.7" height="20.7" fill="#fafafa" stroke="#333" stroke-width="1.6"/><path d="M11.15,0.8 V21.5" stroke="#555" stroke-width="1.3"/><rect x="0.9" y="8.2" width="20.5" height="5.6" fill="#fafafa" stroke="#0f6cbd" stroke-width="1.8"/></g><g transform="translate(761.2,362.4) scale(1.0)"><rect x="0.8" y="0.8" width="20.7" height="20.7" fill="#fafafa" stroke="#333" stroke-width="1.6"/><path d="M11.15,0.8 V21.5" stroke="#555" stroke-width="1.3"/><rect x="0" y="7" width="22.3" height="7.1" fill="#0f6cbd"/><rect x="1.5" y="9.1" width="2.3" height="3" fill="#fafafa"/><rect x="5.8" y="9.1" width="4.500000000000001" height="3" fill="#fafafa"/><rect x="11.8" y="9.1" width="4.599999999999998" height="3" fill="#fafafa"/><rect x="17.8" y="9.1" width="3.0" height="3" fill="#fafafa"/></g><rect x="873" y="251.2" width="10.7" height="1.3" fill="#1a1a1a"/><rect x="854.6" y="295" width="10.7" height="1.3" fill="#1a1a1a"/><rect x="797.9" y="339.2" width="15.9" height="1.3" fill="#1a1a1a"/><rect x="798" y="383" width="11.5" height="1.3" fill="#1a1a1a"/></svg>
<div style="position:absolute;left:797.47px;top:235.00px;font-family:'Liberation Sans',sans-serif;font-size:18.84px;line-height:1;white-space:pre;color:#1a1a1a;font-weight:normal;font-style:normal;transform-origin:0 0;transform:scaleX(0.9502);">Merge &amp; Center</div>
<div style="position:absolute;left:797.48px;top:279.00px;font-family:'Liberation Sans',sans-serif;font-size:18.41px;line-height:1;white-space:pre;color:#1a1a1a;font-weight:normal;font-style:normal;transform-origin:0 0;transform:scaleX(0.9665);">Merge Across</div>
<div style="position:absolute;left:796.90px;top:323.00px;font-family:'Liberation Sans',sans-serif;font-size:18.26px;line-height:1;white-space:pre;color:#1a1a1a;font-weight:normal;font-style:normal;transform-origin:0 0;transform:scaleX(0.9569);">Merge Cells</div>
<div style="position:absolute;left:797.09px;top:367.00px;font-family:'Liberation Sans',sans-serif;font-size:18.84px;line-height:1;white-space:pre;color:#1a1a1a;font-weight:normal;font-style:normal;transform-origin:0 0;transform:scaleX(0.9209);">Unmerge Cells</div>
<svg width="1184" height="666"><path d="M963,264 L1040,302.6" stroke="#f4413a" stroke-width="7.5" stroke-linecap="butt"/><polygon points="931,247.8 971.1,250 956.5,278.6" fill="#f4413a"/><path d="M174,353 L257.3,322.9" stroke="#f4413a" stroke-width="7.5"/><polygon points="140.3,365.5 169.2,338.1 179.8,368.2" fill="#f4413a"/></svg>
<div style="position:absolute;left:0px;top:0px;width:1184px;height:2px;background:#000;"></div>
<div style="position:absolute;left:0px;top:664px;width:1184px;height:2px;background:#000;"></div>
<div style="position:absolute;left:0px;top:0px;width:2px;height:666px;background:#000;"></div>
<div style="position:absolute;left:1182px;top:0px;width:2px;height:666px;background:#000;"></div>
</body></html>
